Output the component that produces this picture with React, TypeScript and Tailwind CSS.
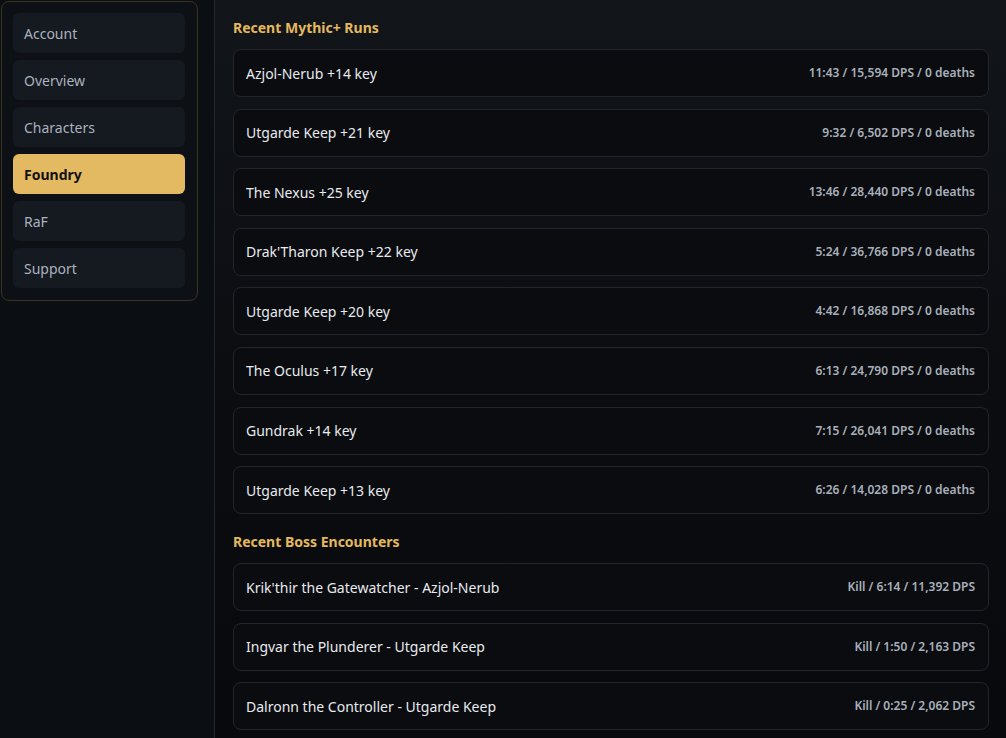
const navItems = ['Account', 'Overview', 'Characters', 'Foundry', 'RaF', 'Support'];

const runs = [
  { name: 'Azjol-Nerub +14 key', stats: '11:43 / 15,594 DPS / 0 deaths' },
  { name: 'Utgarde Keep +21 key', stats: '9:32 / 6,502 DPS / 0 deaths' },
  { name: 'The Nexus +25 key', stats: '13:46 / 28,440 DPS / 0 deaths' },
  { name: "Drak'Tharon Keep +22 key", stats: '5:24 / 36,766 DPS / 0 deaths' },
  { name: 'Utgarde Keep +20 key', stats: '4:42 / 16,868 DPS / 0 deaths' },
  { name: 'The Oculus +17 key', stats: '6:13 / 24,790 DPS / 0 deaths' },
  { name: 'Gundrak +14 key', stats: '7:15 / 26,041 DPS / 0 deaths' },
  { name: 'Utgarde Keep +13 key', stats: '6:26 / 14,028 DPS / 0 deaths' },
];

const bosses = [
  { name: "Krik'thir the Gatewatcher - Azjol-Nerub", stats: 'Kill / 6:14 / 11,392 DPS' },
  { name: 'Ingvar the Plunderer - Utgarde Keep', stats: 'Kill / 1:50 / 2,163 DPS' },
  { name: 'Dalronn the Controller - Utgarde Keep', stats: 'Kill / 0:25 / 2,062 DPS' },
];

function Row({ name, stats }: { name: string; stats: string }) {
  return (
    <div className="flex h-[48px] items-center justify-between rounded-lg border border-[#22262c] bg-[#0a0c10] pl-[12px] pr-[13px]">
      <span className="text-[14px] text-[#e8eaed]">{name}</span>
      <span className="text-[12px] font-semibold text-[#a9b0ba]">{stats}</span>
    </div>
  );
}

function Section({ title, rows }: { title: string; rows: { name: string; stats: string }[] }) {
  return (
    <div>
      <h2 className="mb-[11px] text-[14px] font-bold leading-[20px] text-[#e3b95e]">{title}</h2>
      <div className="flex flex-col gap-[11.6px]">
        {rows.map((r) => (
          <Row key={r.name} name={r.name} stats={r.stats} />
        ))}
      </div>
    </div>
  );
}

export default function App() {
  return (
    <div
      className="flex h-[738px] w-[1006px] overflow-hidden bg-[#0a0c10]"
      style={{ fontFamily: '"Noto Sans", "Open Sans", sans-serif' }}
    >
      <aside className="w-[215px] shrink-0 border-r border-[#24282d] bg-[#0b0e12] pl-[1px] pt-[1px]">
        <nav className="flex w-[197px] flex-col gap-[7px] rounded-lg border border-[#3b3322] bg-[#0d1015] pb-[12px] pl-[11px] pr-[12px] pt-[11px]">
          {navItems.map((item) =>
            item === 'Foundry' ? (
              <div
                key={item}
                className="flex h-[40px] items-center rounded-md bg-[#e3b962] px-[11px] text-[14px] font-bold text-[#111]"
              >
                {item}
              </div>
            ) : (
              <div
                key={item}
                className="flex h-[40px] items-center rounded-md bg-[#151920] px-[11px] text-[14px] text-[#aab2bf]"
              >
                {item}
              </div>
            )
          )}
        </nav>
      </aside>
      <main className="flex-1 bg-gradient-to-b from-[#12151a] via-[#0b0d11] to-[#08090c] pl-[18px] pr-[17px] pt-[18px]">
        <div className="flex flex-col gap-[18px]">
          <Section title="Recent Mythic+ Runs" rows={runs} />
          <Section title="Recent Boss Encounters" rows={bosses} />
        </div>
      </main>
    </div>
  );
}
